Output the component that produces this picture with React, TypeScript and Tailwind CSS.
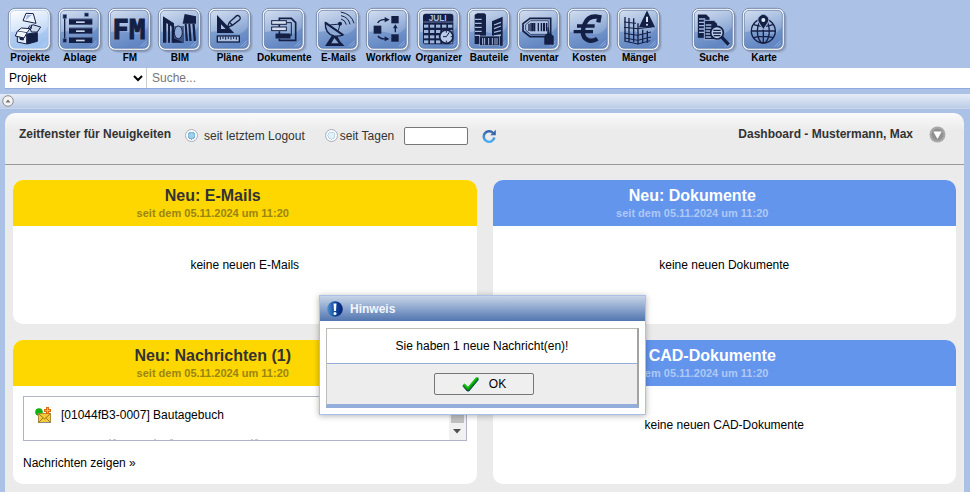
import React from "react";

const INK = "#141f45";

type Tool = { label: string; icon: React.ReactNode; active?: boolean; gap?: boolean };

const drawer = (y: number) => (
  <g key={y}>
    <rect x="33" y={y} width="70" height="18" fill={INK} />
    <path d={`M34 ${y + 1}H102`} stroke="#6f86b5" strokeWidth="2" />
    <rect x="54" y={y + 8} width="26" height="5" fill="#c4d2ea" />
  </g>
);

const tools: Tool[] = [
  {
    label: "Projekte",
    active: true,
    icon: (
      <g stroke={INK} strokeWidth="3" strokeLinejoin="round">
        <path d="M54 16L76 17L84 46L45 38Z" fill="#eef4fc" />
        <path d="M57 21L71 21L53 37Z" fill="#9db3da" stroke="none" />
        <path d="M28 70L56 74L56 108L28 102Z" fill="#dfe9f7" />
        <path d="M36 84l10 2v10l-10-2z" fill={INK} />
        <path d="M58 78L88 74L88 100L58 108Z" fill={INK} />
        <path d="M28 70L40 60L66 62L57 74Z" fill="#f4f8fd" />
        <path d="M28 70L22 84L48 90L57 75" fill="#eef4fc" />
        <path d="M66 60L74 50L98 57L88 72L70 72Z" fill="#cfdcf0" />
        <path d="M66 52L60 62M70 50v12" />
      </g>
    ),
  },
  {
    label: "Ablage",
    icon: (
      <g>
        <path d="M20 24V98" stroke={INK} strokeWidth="4" />
        <rect x="15" y="20" width="11" height="11" fill={INK} stroke="#5c74a6" strokeWidth="2" />
        <rect x="15" y="92" width="11" height="11" fill={INK} stroke="#5c74a6" strokeWidth="2" />
        <rect x="80" y="15" width="11" height="10" fill={INK} stroke="#5c74a6" strokeWidth="2" />
        {[32, 59, 87].map(drawer)}
      </g>
    ),
  },
  {
    label: "FM",
    icon: (
      <text x="63" y="94" textAnchor="middle" fontFamily="DejaVu Sans Mono, monospace" fontWeight="bold" fontSize="82" fill={INK} stroke={INK} strokeWidth="3">
        FM
      </text>
    ),
  },
  {
    label: "BIM",
    icon: (
      <g fill={INK}>
        <path d="M15 25L48 46V104H41V56L36 52V104H30V48L25 45V104H15Z" />
        <path d="M45 54H78V104H45Z" opacity=".55" />
        <ellipse cx="61" cy="73" rx="12" ry="19" fill="#8fa9d6" stroke={INK} strokeWidth="3" />
        <path d="M46 90L78 104H46Z" />
        <path d="M74 47L80 18L114 25V47Z" />
        <path d="M80 47h6l4 52h-7zM91 47h6l4 52h-7zM103 47h7l4 52h-7z" />
      </g>
    ),
  },
  {
    label: "Pläne",
    icon: (
      <g fill="none" stroke={INK} strokeWidth="4">
        <path d="M29 26V73H74Z" fill={INK} />
        <path d="M39 49V63H53Z" fill="#a9bfe2" stroke="none" />
        <path d="M58 58L64 43L86 23Q92 21 96 27Q98 31 95 35L73 52Z" fill="#a9bfe2" />
        <path d="M64 43L73 52M58 58L66 55" />
        <rect x="28" y="84" width="66" height="18" fill="#a9bfe2" />
        <path d="M37 86v9M45 86v7M53 86v9M61 86v7M69 86v9M77 86v7M85 86v9" strokeWidth="3" />
      </g>
    ),
  },
  {
    label: "Dokumente",
    icon: (
      <g fill="none" stroke={INK} strokeWidth="5">
        <path d="M52 38V31H88L101 44V97H52V92" />
        <path d="M75 44H88V83H75" strokeWidth="3" />
        <path d="M52 50v6M52 70v8" />
        <rect x="29" y="38" width="44" height="11" fill="#d5e0f2" strokeWidth="3" />
        <rect x="29" y="57" width="44" height="11" fill="#d5e0f2" strokeWidth="3" />
        <rect x="42" y="78" width="42" height="12" fill={INK} strokeWidth="3" />
      </g>
    ),
  },
  {
    label: "E-Mails",
    icon: (
      <g fill="none" stroke={INK} strokeWidth="4">
        <path d="M28 44Q26 76 54 84Q70 86 81 81Z" fill="#8da8d4" />
        <path d="M28 44L81 81" strokeWidth="6" />
        <path d="M41 51L72 48L67 68" strokeWidth="3" />
        <circle cx="72" cy="47" r="4" fill={INK} />
        <path d="M49 84L31 112H81L70 100L62 85" fill={INK} />
        <path d="M55 90L46 106H68Z" fill="#8da8d4" stroke="none" />
        <path d="M75 33Q88 36 91 50M75 23Q97 27 102 49M74 12Q107 18 114 46" strokeWidth="3" />
      </g>
    ),
  },
  {
    label: "Workflow",
    icon: (
      <g fill={INK}>
        <rect x="23" y="53" width="23" height="24" />
        <rect x="76" y="24" width="22" height="22" />
        <rect x="76" y="79" width="22" height="22" />
        <g fill="none" stroke={INK} strokeWidth="4">
          <path d="M35 45Q42 33 58 35M36 84Q44 95 60 92M88 73V58" />
        </g>
        <path d="M56 27l15 8-15 8zM56 85l14 8-14 7zM81 61l7-12 7 12z" />
      </g>
    ),
  },
  {
    label: "Organizer",
    icon: (
      <g>
        <rect x="18" y="17" width="91" height="92" rx="8" fill={INK} />
        <path d="M19 42H110" stroke="#8fa9d4" strokeWidth="2" />
        <text x="62" y="40" textAnchor="middle" fontFamily="Liberation Sans, sans-serif" fontWeight="bold" fontSize="25" fill="#aabfe1">
          JULI
        </text>
        {[50, 66, 82, 97].map((y) =>
          [21, 39, 57, 75, 93].map((x) => <rect key={`${x}-${y}`} x={x} y={y} width="13" height="9" fill="#9db4dc" />)
        )}
        <circle cx="88" cy="86" r="20" fill="#b9cbe8" stroke={INK} strokeWidth="5" />
        <path d="M88 86L97 73M88 86H78M88 69v5M88 98v5M101 86h5" stroke={INK} strokeWidth="3" />
      </g>
    ),
  },
  {
    label: "Bauteile",
    icon: (
      <g fill={INK}>
        <path d="M23 20L31 16H52L57 20V108H23Z" />
        <path d="M24 34h20M24 46h20M24 58h20M24 70h20M24 82h15" stroke="#a6bce0" strokeWidth="4" />
        <path d="M75 40L107 26V113H75Z" />
        <path d="M81 51L102 43M81 62L102 54M81 73L102 68M81 84L102 81" stroke="#a6bce0" strokeWidth="4" />
        <rect x="37" y="84" width="60" height="29" stroke="#a6bce0" strokeWidth="2" />
        <path d="M47 90v20M53 90v20M65 90v20M76 90v20M84 90v20M90 90v20" stroke="#a6bce0" strokeWidth="3" />
      </g>
    ),
  },
  {
    label: "Inventar",
    icon: (
      <g fill="none" stroke={INK} strokeWidth="5">
        <path d="M39 31H101V86H39L18 69V47Z" />
        <path d="M41 38H94V79H41L26 66V50Z" fill="#aec2e4" strokeWidth="2" />
        <path d="M36 47v22M42 45v25M53 45v25M64 45v25M73 45v25M89 45v25" strokeWidth="4" />
        <path d="M47 45v25M81 45v25" strokeWidth="7" />
        <path d="M93 58L97 76L109 84V109H83V84L92 76Z" fill={INK} strokeWidth="2" />
      </g>
    ),
  },
  {
    label: "Kosten",
    icon: (
      <g fill="none" stroke={INK}>
        <path d="M94 43L97 27Q64 20 53 48Q38 88 65 97Q78 101 91 92" strokeWidth="13" />
        <path d="M30 54H83M20 71H78" strokeWidth="10" />
      </g>
    ),
  },
  {
    label: "Mängel",
    icon: (
      <g fill="none" stroke={INK} strokeWidth="4">
        <path d="M24 27V101M36 30V102M50 31V103M63 46V109M77 65V105M91 68V104" />
        <path d="M21 42L57 46M21 58L62 62L104 57M22 76L62 82L102 72M24 90L62 97L102 87M25 100L63 108L100 98" strokeWidth="3" />
        <path d="M90 12L111 56H69Z" fill={INK} />
        <path d="M90 26V42" stroke="#dce6f5" strokeWidth="6" />
        <circle cx="90" cy="50" r="3" fill="#dce6f5" stroke="none" />
      </g>
    ),
  },
  {
    label: "Suche",
    gap: true,
    icon: (
      <g fill="none" stroke={INK}>
        <path d="M18 20H43L52 29V89H18Z" fill={INK} />
        <path d="M21 33h19M21 43h18M21 53h18M21 63h16M21 73h16" stroke="#9fb7de" strokeWidth="4" />
        <path d="M37 37H66L77 48V95H37Z" fill={INK} stroke="#9fb7de" strokeWidth="3" />
        <path d="M41 51h17M41 60h17M41 69h14M41 78h14M41 87h17" stroke="#9fb7de" strokeWidth="4" />
        <circle cx="75" cy="74" r="19" fill="#b7c9e7" strokeWidth="5" />
        <path d="M64 67h22M63 75h24M65 83h20" strokeWidth="4" />
        <path d="M89 87L110 110" strokeWidth="10" />
      </g>
    ),
  },
  {
    label: "Karte",
    icon: (
      <g fill="none" stroke={INK} strokeWidth="4">
        <circle cx="64" cy="69" r="36" />
        <ellipse cx="64" cy="69" rx="18" ry="36" />
        <path d="M64 58V105M28 69H100M35 50Q64 60 93 50M35 89Q64 81 93 89" />
        <path d="M64 65L51 45A16 16 0 1 1 77 45Z" fill={INK} stroke="#9cb4dc" strokeWidth="3" />
        <circle cx="64" cy="36" r="6" fill="#e0e9f6" stroke="none" />
      </g>
    ),
  },
];

function ToolButton({ label, icon, active, gap }: Tool) {
  return (
    <button type="button" className={`flex min-w-[50px] flex-col items-center px-px ${gap ? "ml-[25px]" : ""}`}>
      <svg className="-mb-0.5 size-12" viewBox="0 0 144 144" aria-hidden="true">
        <defs>
          <linearGradient id={`tile-${label}`} x1="0" y1="0" x2=".35" y2="1">
            <stop offset="0" stopColor={active ? "#ffffff" : "#d3def0"} />
            <stop offset=".5" stopColor={active ? "#d7e6f9" : "#a3bade"} />
            <stop offset="1" stopColor={active ? "#a9c8f0" : "#6e91c8"} />
          </linearGradient>
        </defs>
        <rect x="13" y="13" width="128" height="128" rx="22" fill="#8391ab" opacity=".35" />
        <rect x="11" y="11" width="126" height="126" rx="21" fill="#7f8ca5" opacity=".7" />
        <rect x="7" y="7" width="126" height="126" rx="20" fill="#fbfcfe" stroke="#7889a8" strokeWidth="3" />
        <rect x="13" y="13" width="114" height="114" rx="14" fill={`url(#tile-${label})`} stroke={active ? "#a9bfe0" : "#55719f"} strokeWidth="2" />
        <path d="M14 78Q50 72 78 82T126 62V112Q126 126 112 126H28Q14 126 14 112Z" fill={active ? "#8fb8ee" : "#4f79bb"} opacity=".4" />
        <path d="M104 122L122 104M112 122L122 112" stroke="#dbe6f6" strokeWidth="2" opacity=".6" />
        <g transform="translate(6 6)">{icon}</g>
      </svg>
      <span className="px-px text-[10px] leading-3 font-bold text-black">{label}</span>
    </button>
  );
}

type CardProps = { title: string; tone: "gold" | "blue"; children: React.ReactNode };

function Card({ title, tone, children }: CardProps) {
  const header = tone === "gold" ? "bg-[#ffd700] text-[#333]" : "bg-[#6495ed] text-white";
  const sub = tone === "gold" ? "text-[#998514]" : "text-[#aec8f6]";
  return (
    <section className="h-36 overflow-hidden rounded-[10px] bg-white">
      <header className={`h-[46px] pt-1.5 pr-16 text-center font-bold ${header}`}>
        <h2 className="text-base leading-5">{title}</h2>
        <p className={`text-[11px] leading-[14px] ${sub}`}>seit dem 05.11.2024 um 11:20</p>
      </header>
      {children}
    </section>
  );
}

function Empty({ children }: { children: React.ReactNode }) {
  return <p className="pt-8 text-center leading-[14px] text-black">{children}</p>;
}

const radioClass =
  "size-[13px] appearance-none rounded-full border border-[#a7b0bf] bg-[radial-gradient(circle,#e4f1fa_0_3px,#bdd6e6_3px_4px,#f8fafc_4px)] checked:bg-[radial-gradient(circle,#9fd0ee_0_2px,#6ba5cb_4px,#f8fafc_4px)]";

export default function App() {
  return (
    <div className="relative min-h-screen bg-[#abc2e6] text-xs text-[#333] [font-family:'Liberation_Sans',Arial,sans-serif]">
      <nav className="flex h-[68px] pt-1.5 pl-[5px]">
        {tools.map((t) => (
          <ToolButton key={t.label} {...t} />
        ))}
      </nav>

      <form className="ml-[5px] flex h-[21px] border-b border-[#8faadc] bg-white text-black">
        <select aria-label="Suchbereich" className="w-[142px] border-r border-[#ccc] bg-white">
          <option>Projekt</option>
        </select>
        <input aria-label="Suche" type="search" placeholder="Suche..." className="flex-1 px-[5px] outline-none placeholder:text-[#757575]" />
      </form>

      <div className="mt-[5px] flex h-[15px] items-center border-b border-[#c9d3ea] bg-linear-to-b from-[#e6edf7] to-[#bccde7] pl-0.5">
        <button type="button" aria-label="Leiste einklappen">
          <svg className="block size-3" viewBox="0 0 12 12">
            <circle cx="6" cy="6" r="5.3" fill="#f4f4f4" stroke="#8b8b8b" />
            <path d="M3.5 7.5L6 4.5L8.500 7.500Z" fill="#777" />
          </svg>
        </button>
      </div>

      <main className="mt-1 mr-1.5 ml-[5px] rounded-t-[10px] bg-[#ebebeb] bg-linear-to-b from-[#fafafa] to-[#ebebeb] to-[18px]">
        <div className="flex h-[52px] items-center border-b border-[#999] pr-[18px] pb-1.5 pl-3.5">
          <h1 className="pb-1 font-bold">Zeitfenster für Neuigkeiten</h1>
          <label className="ml-3.5 flex items-center gap-1.5">
            <input type="radio" name="zeit" defaultChecked className={radioClass} />
            seit letztem Logout
          </label>
          <label className="ml-5 flex items-center gap-0.5">
            <input type="radio" name="zeit" className={radioClass} />
            seit Tagen
          </label>
          <input aria-label="Anzahl Tage" type="text" className="ml-2.5 h-[18px] w-16 rounded-[2px] border border-[#767676] bg-white px-1" />
          <button type="button" aria-label="Aktualisieren" className="ml-3.5">
            <svg className="block size-3.5" viewBox="0 0 14 14">
              <defs>
                <linearGradient id="reload" x1="0" y1="0" x2="0" y2="1">
                  <stop offset="0" stopColor="#3566ad" />
                  <stop offset="1" stopColor="#4fb0f5" />
                </linearGradient>
              </defs>
              <path d="M11 4A5.300 5.300 0 1 0 12.300 8.500" fill="none" stroke="url(#reload)" strokeWidth="2.500" />
              <path d="M13.800 .8V6.300H8.300Z" fill="#3566ad" />
            </svg>
          </button>
          <strong className="ml-auto pb-1">Dashboard - Mustermann, Max</strong>
          <button type="button" aria-label="Dashboard-Menü" className="ml-4 pb-0.5">
            <svg className="block size-[17px]" viewBox="0 0 17 17">
              <circle cx="8.500" cy="8.500" r="8" fill="#a9a9a9" />
              <circle cx="8.500" cy="8.500" r="6" fill="#919191" />
              <path d="M4.300 5.500H12.700L8.500 13Z" fill="#fff" />
            </svg>
          </button>
        </div>

        <div className="grid grid-cols-2 gap-4 px-2 pt-[15px] pb-2">
          <Card title="Neu: E-Mails" tone="gold">
            <Empty>keine neuen E-Mails</Empty>
          </Card>
          <Card title="Neu: Dokumente" tone="blue">
            <Empty>keine neuen Dokumente</Empty>
          </Card>
          <Card title="Neu: Nachrichten (1)" tone="gold">
            <div className="mx-2.5 mt-2.5 flex h-[45px] border border-[#b0b4c6] text-black">
              <div className="flex flex-1 flex-col justify-between overflow-hidden">
                <a href="#nachricht" className="flex items-center gap-2.5 pt-2.5 pl-[11px]">
                  <svg className="size-4" viewBox="0 0 16 16" aria-hidden="true">
                    <circle cx="4" cy="5" r="3.800" fill="#12b012" />
                    <rect x="3.500" y="6.500" width="12" height="9" fill="#f6ca38" stroke="#a88a3c" />
                    <path d="M4 7L9.500 12L15 7M4 15L8 11M15 15L11 11" fill="none" stroke="#9c7a1e" />
                    <path d="M4 15.500H16" stroke="#8a8a8a" />
                    <path d="M12.500 0V7M9 3.500H16" stroke="#e06a10" strokeWidth="3" />
                    <path d="M12.500 1V6M10 3.500H15" stroke="#ffb04a" />
                  </svg>
                  [01044fB3-0007] Bautagebuch
                </a>
                <svg className="h-px w-60" viewBox="0 0 240 1" aria-hidden="true">
                  <path d="M85 .5h2M89 .5h3M130 .5h2M146 .5h3M227 .5h2M231 .5h3" stroke="#ccc" />
                </svg>
              </div>
              <div className="flex w-[17px] flex-col items-center bg-[#f1f1f1]" aria-hidden="true">
                <div className="h-[26px] w-[13px] bg-[#c1c1c1]" />
                <svg className="mt-1 h-2 w-2" viewBox="0 0 8 8">
                  <path d="M0 2H8L4 6.500Z" fill="#505050" />
                </svg>
              </div>
            </div>
            <a href="#nachrichten" className="mt-[15px] ml-2.5 block leading-[14px] text-black">
              Nachrichten zeigen »
            </a>
          </Card>
          <Card title="Neu: CAD-Dokumente" tone="blue">
            <Empty>keine neuen CAD-Dokumente</Empty>
          </Card>
        </div>
      </main>

      <div className="absolute inset-x-0 top-[295px] flex justify-center pr-[5px]">
        <div role="dialog" aria-labelledby="hinweis" className="w-[327px] border border-[#a9c1e6] bg-white text-black shadow-[0_1px_6px_rgba(0,0,0,0.3)]">
          <div className="flex h-[25px] items-center gap-[7px] bg-linear-to-b from-[#c8d5e8] to-[#5276b0] pl-[7px]">
            <svg className="size-4" viewBox="0 0 16 16" aria-hidden="true">
              <defs>
                <linearGradient id="info" x1="0" y1="0" x2="1" y2="0">
                  <stop offset="0" stopColor="#4f8fd0" />
                  <stop offset=".5" stopColor="#0d4a9c" />
                  <stop offset="1" stopColor="#0a1f78" />
                </linearGradient>
              </defs>
              <circle cx="8" cy="8" r="7.800" fill="url(#info)" />
              <path d="M6.500 2.500H9.500L9 10H7Z" fill="#fff" />
              <circle cx="8" cy="12.600" r="1.500" fill="#fff" />
            </svg>
            <h2 id="hinweis" className="font-bold text-[#f1f5fb]">Hinweis</h2>
          </div>
          <div className="mx-1.5 mt-[7px] mb-1.5 border-t border-r-2 border-b-4 border-l border-t-[#bcbcb4] border-r-[#a3a3a3] border-b-[#93aedb] border-l-[#bcbcb4]">
            <p className="h-[35px] border-b border-[#93aedb] text-center leading-[34px]">Sie haben 1 neue Nachricht(en)!</p>
            <div className="flex h-10 items-center justify-center bg-[#ededed] pl-1">
              <button type="button" className="flex h-[22px] w-[100px] items-center justify-center gap-2.5 rounded-[2px] border border-[#767676] bg-[#efefef]">
                <svg className="h-4 w-[17px]" viewBox="0 0 17 16" aria-hidden="true">
                  <path d="M.5 9.500L2.500 7.500L6 11L14 1.500H16.500V3.500L7 15H5Z" fill="#079307" />
                  <path d="M1 10.200L5.200 15H7L16.500 3.500" fill="none" stroke="#0b2a58" strokeWidth=".9" />
                  <path d="M2 8.200L6 12L14.500 2" fill="none" stroke="#14d014" strokeWidth="1.200" />
                </svg>
                OK
              </button>
            </div>
          </div>
        </div>
      </div>
    </div>
  );
}
